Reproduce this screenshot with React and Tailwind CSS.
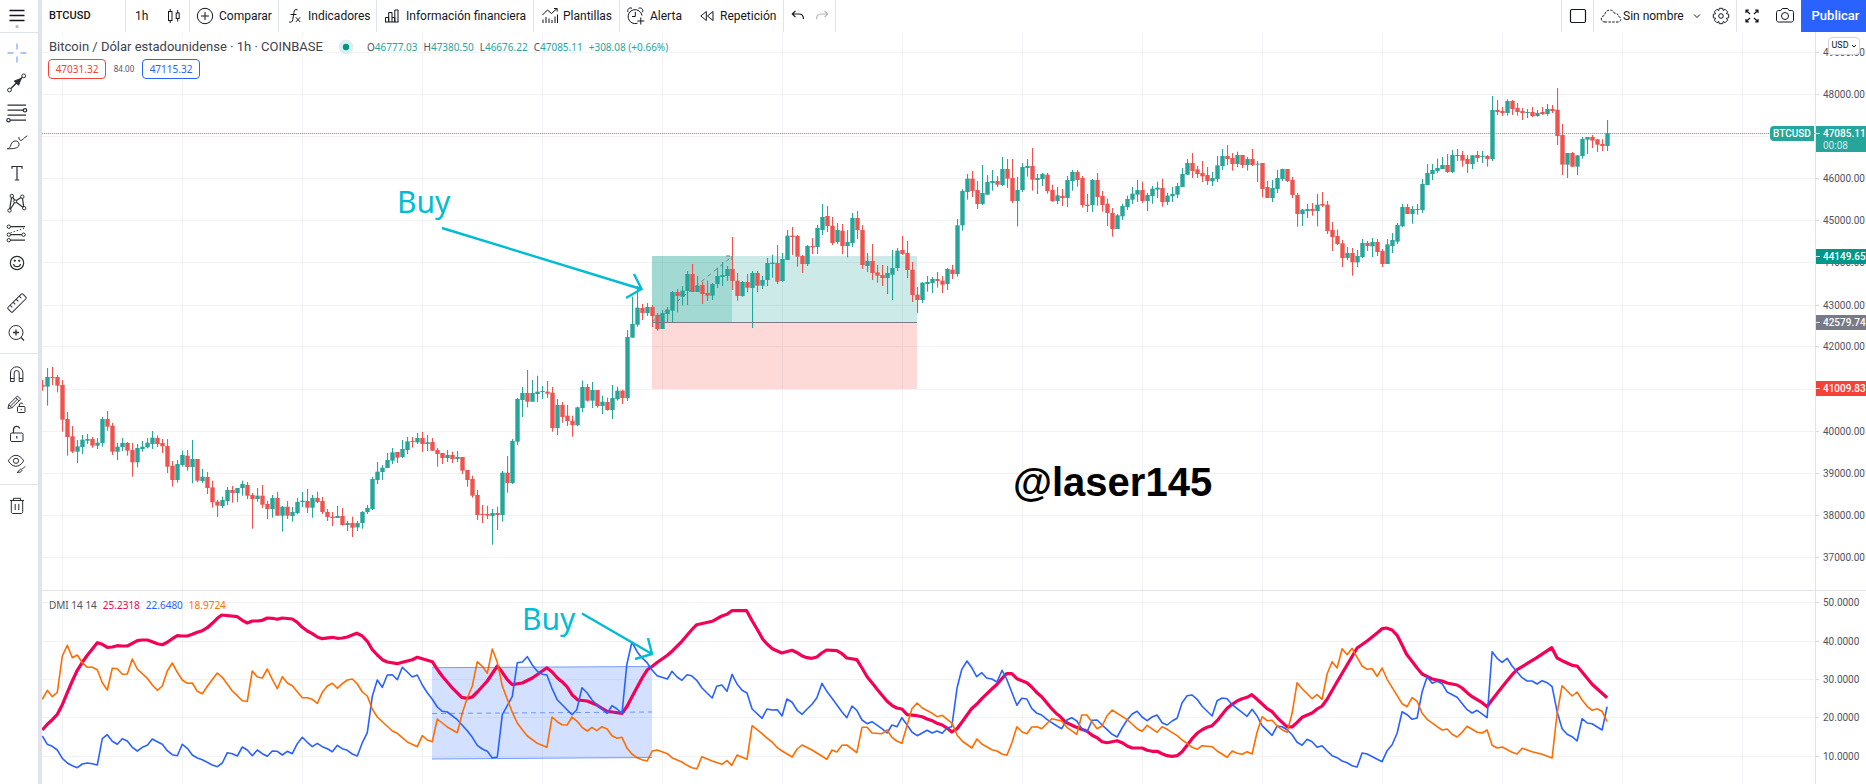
import React from "react";

/* ---------- price data: kind, high, top, bottom, low (in ticks below the block's base) ---------- */

const TICK = 3;
const BAR_STEP = 5;
const FIRST_BAR = 42;

const PRICE_BLOCKS = [
  {
    first: 0,
    base: 340,
    bars: `r 120 135 140 152;g 84 111 140 197;r 81 111 114 135;r 105 111 137 157;r 120 135 239 275;r 216 237 291 347;r 258 289 335 339;g 300 319 335 369;g 285 299 321 342;g 282 297 302 312;r 291 297 317 323;g 294 308 317 327;g 231 237 309 320;r 213 237 260 272;r 249 257 335 345;g 309 320 335 360;g 294 309 321 333;r 306 309 332 347;r 309 330 367 410;g 312 324 367 382;g 303 320 327 335;g 294 308 322 325;g 273 293 312 327;r 286 294 312 321;r 297 309 319 339;r 297 318 380 399;r 363 377 420 440;g 360 372 420 428;g 332 345 375 380;r 330 347 381 392;g 300 357 381 430;r 357 357 422 426;g 387 410 423 429;r 396 411 444 462;r 422 442 487 503;r 479 485 497 531;g 470 480 498 504;g 441 450 483 495;r 438 450 459 488;g 444 444 459 486;g 422 432 444 467;r 426 435 467 477;r 459 465 477 566;g 444 467 477 485;r 435 467 494 504;r 482 492 507 537;g 465 474 507 533;r 456 474 527 527;g 498 500 527 575;r 483 500 527 537;g 501 516 528 545;g 474 486 519 522;g 456 482 486 501;r 447 483 503 519;g 465 474 503 533;r 455 474 486 489;r 471 483 516 522;r 507 516 531 543;r 516 530 534 558;g 498 528 534 534;r 504 528 555 557;g 543 549 555 573;r 530 549 563 591;g 543 549 562 573;g 513 516 549 566;g 495 504 516 522;g 411 417 507 510;g 366 395 420 432;g 375 383 396 420;g 339 360 384 384;g 324 337 362 372;r 336 336 353 369;g 300 327 351 354;g 291 304 330 342;r 291 303 306 323;g 279 294 307 312;r 276 294 312 336;g 285 307 312 333;r 294 306 332 333;r 324 330 342 380;r 339 339 354 372;g 330 345 354 366;r 335 345 357 369;g 333 351 357 366;r 351 351 392 402;r 390 390 420 440;r 407 417 467 473;r 450 465 525 540;r 495 522 525 549;r 497 522 527 537;g 507 519 528 614;r 500 519 525 570`,
  },
  {
    first: 92,
    base: 180,
    bars: `g 873 878 1005 1025;r 828 878 909 938;g 777 783 909 912;g 654 657 785 795;g 621 639 660 711;r 570 639 665 682;g 600 639 665 665;g 587 635 642 666;g 618 633 636 657;r 603 635 641 654;r 621 638 744 755;g 657 675 744 765;r 666 675 711 728;r 675 707 723 738;r 707 722 735 770;g 680 682 736 738;g 602 621 684 697;r 612 621 662 665;g 606 630 662 684;r 630 630 678 683;g 647 665 678 702;r 653 666 690 692;g 615 654 690 717;g 620 632 657 662;r 629 632 654 672;g 450 471 654 663;g 350 432 473 473;g 318 383 434 440;r 372 384 399 420;g 369 381 399 408;r 375 381 408 441;r 399 405 447 452;g 390 399 447 447;g 381 389 402 429;g 333 336 392 428;r 327 336 348 397;g 318 332 350 376;g 273 282 333 375;r 252 282 336 336;g 288 317 336 336;r 305 315 342 372;r 302 339 347 363;g 309 312 347 360;g 263 288 312 324;g 246 285 291 318;g 258 267 288 303;r 171 267 303 330;r 279 302 348 362;g 303 306 348 350;r 282 306 323 336;g 273 279 324 444;r 273 279 317 336;g 288 300 317 327;g 234 249 300 318;g 224 248 252 293;r 195 249 305 312;g 219 237 303 306;g 150 167 240 240;r 141 167 171 225;r 165 168 230 260;r 225 228 252 279;g 195 198 252 258;r 174 198 202 222;g 135 144 201 222;g 72 111 150 165;r 78 108 138 156;r 111 137 189 195;g 129 150 186 192;r 132 152 198 222;g 150 186 198 232;g 99 114 189 201;r 93 114 150 177;r 135 150 255 267;g 219 243 258 276;r 192 243 279 300;r 255 277 287 308;r 255 285 294 318;g 258 279 294 342;g 210 264 284 360;g 204 212 264 273;r 168 210 222 225;r 183 219 270 294;r 246 269 345 366;r 321 344 360 399;g 306 308 360 369;g 288 306 312 335`,
  },
  {
    first: 178,
    base: 100,
    bars: `g 531 537 549 579;r 516 537 543 563;r 528 542 554 579;g 504 507 552 570;r 495 509 522 537;g 357 376 522 530;g 267 273 376 392;g 222 236 276 299;r 213 236 273 291;r 243 270 312 327;g 195 279 312 315;g 225 246 284 284;g 210 243 249 272;r 228 243 254 261;g 171 207 255 258;r 177 207 236 264;r 177 234 303 309;g 231 270 303 379;g 189 201 270 276;g 177 198 204 230;r 144 198 239 272;g 222 234 240 282;g 219 222 237 258;r 219 224 273 281;r 254 270 303 306;g 261 286 303 312;r 267 288 294 318;g 228 240 294 321;g 210 216 243 272;r 210 216 240 260;r 228 234 315 323;r 282 314 318 336;g 237 240 315 336;r 219 240 291 317;r 273 288 315 335;r 296 311 339 378;r 324 339 387 410;g 342 346 387 387;g 311 318 349 360;g 287 297 321 330;g 261 281 299 312;g 240 270 284 306;r 245 270 303 309;g 279 285 303 333;g 258 266 288 311;g 245 263 269 294;r 236 264 306 320;g 279 287 306 315;g 261 282 289 306;g 249 258 284 294;g 204 222 261 261;g 177 189 224 225;r 159 189 213 234;r 198 208 222 234;r 183 219 229 246;r 201 225 243 255;g 216 234 244 258;g 168 196 237 246;g 147 168 198 210;r 135 168 177 195;r 159 174 192 212;g 155 165 192 201;r 165 165 195 204;g 171 177 195 212;r 147 177 195 198;g 183 191 194 246;r 189 189 267 292;r 243 261 294 294;g 240 264 294 306;g 210 234 267 279;g 206 207 237 243;r 207 207 243 246;r 231 240 285 294;r 279 285 342 380;g 327 329 342 378;g 312 327 333 354;r 309 327 333 347;g 282 314 333 379;r 276 312 317 321;r 303 314 393 402;r 366 390 411 453;r 389 408 432 435;r 420 430 474 501;g 441 459 474 481;r 444 459 487 527;g 450 468 487 501;g 417 429 471 474;r 423 429 438 453;g 414 426 439 471`,
  },
  {
    first: 267,
    base: 70,
    bars: `r 507 516 546 558;r 537 543 582 591;g 507 523 582 582;g 489 510 528 549;g 459 465 515 522;g 402 411 469 471;r 402 411 432 432;g 408 417 432 461;g 402 417 420 434;g 327 342 420 429;g 282 309 345 345;g 282 300 312 330;g 266 294 303 309;g 261 285 297 297;r 252 285 306 309;g 240 255 306 309;g 237 255 258 273;r 243 255 272 290;r 255 267 282 309;g 255 256 282 297;r 243 255 264 276;g 243 258 261 279;r 255 258 267 290;g 78 120 267 273;r 90 120 126 135;r 111 123 129 138;g 88 93 129 137;r 90 93 117 135;r 99 114 126 137;r 114 123 129 150;g 117 126 129 144;r 111 126 138 141;g 120 129 138 140;r 111 126 132 135;g 102 117 132 137;r 105 117 123 129;r 54 119 198 225;r 162 195 284 315;g 249 249 284 324;r 246 249 290 291;g 255 256 290 315;g 201 207 258 266;g 201 201 209 252;r 195 201 212 234;r 207 208 224 246;r 208 222 228 243;g 150 189 228 243`,
  },
];

const CANDLES = PRICE_BLOCKS.flatMap(({ first, base, bars }) =>
  bars.split(";").map((bar, n) => {
    const [kind, ...levels] = bar.trim().split(" ");
    const [high, top, bottom, low] = levels.map((v) => base + Number(v) / TICK);
    return { x: FIRST_BAR + (first + n) * BAR_STEP, up: kind === "g", high, top, bottom, low };
  })
);

/* ---------- directional movement lines: three sections, each with its own horizontal scale ---------- */

const SECTIONS = [
  { x: 40, scale: 3 },
  { x: 540, scale: 2.904 },
  { x: 1060, scale: 2.8 },
];

const ADX = [
  "7,450 22,433 37,419 52,403 67,374 82,338 97,303 112,271 127,247 142,226 157,207 172,188 187,193 202,202 217,201 232,197 247,198 262,198 277,190 292,182 307,180 322,180 337,185 352,191 367,194 382,187 397,176 412,167 427,168 442,168 457,163 472,157 487,152 502,143 517,130 532,115 545,105 592,110 607,121 622,129 637,123 652,123 667,121 682,114 697,115 712,118 727,114 757,117 772,127 787,142 802,153 817,161 832,171 847,176 877,172 892,175 907,174 922,171 950,160 967,168 982,184 997,209 1012,225 1027,239 1042,246 1072,251 1087,247 1117,239 1132,232 1177,245 1192,268 1207,289 1235,322 1265,352 1282,355 1297,351 1312,336 1342,303 1372,258 1387,277 1402,299 1417,314 1447,309 1477,294",
  "20,263 35,276 50,293 64,305 79,321 93,344 110,360 137,363 165,375 180,385 195,394 210,396 238,400 252,380 267,351 282,322 297,293 312,269 326,259 341,247 370,226 385,212 412,184 440,150 455,134 500,124 528,108 543,103 557,92 600,92 615,121 632,150 647,178 660,193 675,206 702,219 732,211 747,218 760,227 775,233 790,235 804,231 818,219 832,210 862,212 877,221 891,234 920,239 935,264 950,290 964,308 980,329 1008,364 1022,376 1036,384 1051,387 1066,404 1095,407 1110,410 1124,417 1139,422 1153,430 1168,435 1183,445 1196,456 1211,446 1226,425 1253,386 1268,373 1283,356 1312,327 1326,314 1341,296 1355,281 1370,281 1385,296 1414,308 1428,321 1443,338 1457,350 1486,386 1501,402",
  "0,409 14,425 28,433 42,440 76,454 90,466 104,473 118,485 132,488 160,482 174,488 188,498 202,504 230,504 244,511 258,514 272,514 286,521 300,527 314,529 328,527 342,515 356,496 370,476 384,460 398,449 412,442 426,437 440,422 468,385 482,373 496,363 510,356 524,352 537,344 551,357 580,386 594,395 610,415 635,440 650,441 664,427 678,412 706,399 720,387 734,378 748,358 774,309 832,204 860,183 888,159 902,146 914,144 930,150 944,166 958,195 970,222 985,243 1000,264 1014,282 1042,297 1070,303 1084,309 1112,315 1126,324 1140,338 1154,350 1182,368 1196,380 1210,359 1238,321 1252,302 1266,284 1280,269 1335,233 1377,203 1392,234 1406,242 1434,256 1448,258 1462,276 1490,313 1532,353",
];

const PLUS_DI = [
  "7,468 22,493 37,499 52,510 67,535 82,549 97,557 112,563 127,552 142,549 157,551 172,555 187,476 202,464 217,484 232,493 247,476 262,483 277,502 292,513 307,502 322,496 337,477 352,485 367,493 382,512 397,524 412,527 427,493 442,505 457,525 472,534 487,539 517,555 532,560 547,549 562,518 577,521 592,528 607,501 622,510 637,527 652,510 667,521 682,529 697,513 712,514 727,525 742,514 757,521 772,491 787,472 802,487 817,500 832,490 847,500 862,506 877,515 892,496 907,506 922,511 937,522 952,528 967,488 982,458 997,349 1012,300 1027,322 1042,285 1057,284 1072,299 1087,262 1102,276 1117,291 1132,285 1147,315 1162,338 1177,358 1192,381 1207,394 1222,396 1252,419 1267,436 1282,452 1297,472 1312,496 1327,507 1342,514 1357,534 1372,531 1387,404 1402,377 1417,349 1432,248 1447,246 1462,230 1477,255 1492,274 1507,283",
  "20,285 35,326 50,359 93,404 107,389 122,323 137,339 151,360 165,374 195,400 209,377 224,387 238,400 252,254 267,186 282,215 296,233 311,248 326,271 340,287 370,297 383,274 398,291 412,301 427,284 440,287 455,301 470,323 485,339 500,354 513,319 528,315 543,334 558,283 572,312 587,331 601,339 616,387 645,415 659,387 674,390 689,389 703,408 717,357 732,367 747,391 761,403 775,388 790,373 804,353 819,310 833,334 862,374 877,396 891,413 906,378 920,391 935,420 950,431 964,425 993,446 1008,459 1022,435 1037,440 1051,413 1066,435 1080,456 1095,467 1124,451 1139,459 1153,453 1168,460 1182,444 1196,440 1211,325 1225,268 1240,243 1254,263 1268,290 1283,278 1297,294 1312,297 1327,306 1342,271 1355,297 1385,376 1399,355 1414,357 1428,385 1443,400 1457,405 1472,418 1501,438 1515,446 1530,420 1544,413",
  "47,423 62,448 76,455 90,421 104,420 118,435 132,449 146,463 160,471 174,444 188,420 202,402 216,394 230,411 244,422 258,411 272,405 286,428 300,435 314,423 328,415 342,368 356,347 370,345 384,358 398,379 426,408 440,362 454,354 468,356 482,374 524,409 538,388 552,408 566,437 594,466 608,438 622,440 636,449 650,464 664,487 678,496 692,478 706,485 720,502 734,497 748,513 762,527 776,533 790,543 804,548 818,557 832,561 846,519 860,522 902,545 916,512 930,494 944,460 958,395 972,404 986,418 1000,414 1014,336 1028,290 1042,310 1056,304 1070,311 1084,336 1112,352 1140,389 1154,399 1168,391 1196,413 1210,215 1224,235 1238,247 1252,235 1266,258 1294,293 1308,303 1322,303 1336,312 1350,302 1364,308 1378,320 1392,395 1406,446 1420,463 1434,470 1448,483 1462,416 1476,429 1490,431 1518,450 1532,380",
];

const MINUS_DI = [
  "7,358 22,331 37,350 52,337 67,228 82,196 97,233 112,225 127,248 142,262 157,262 172,269 187,308 202,330 217,265 232,266 247,283 262,282 277,237 292,267 322,295 337,315 352,331 367,318 382,273 397,249 412,277 427,300 442,310 457,309 472,334 487,341 502,319 532,279 547,292 577,333 592,347 607,362 622,364 637,273 652,291 667,294 682,267 697,298 712,326 727,290 742,309 757,317 787,353 802,353 817,358 832,370 847,337 862,318 877,310 892,325 907,311 922,300 937,297 952,312 967,336 982,348 997,388 1012,411 1057,453 1072,460 1087,473 1102,486 1132,500 1147,467 1162,480 1177,485 1192,417 1222,441 1252,458 1267,399 1282,354 1297,318 1312,245 1327,259 1342,280 1357,207 1372,247 1387,318 1417,397 1432,429 1447,449 1462,468 1492,490",
  "20,502 35,411 50,425 64,434 79,435 93,411 108,424 122,442 137,453 151,442 165,452 180,440 195,447 209,467 224,475 238,472 253,505 267,522 282,533 296,539 311,543 326,513 340,510 370,521 383,533 412,546 427,556 441,563 456,566 470,530 500,543 528,553 543,542 557,556 572,525 601,538 616,437 645,461 660,475 674,486 688,502 703,513 732,531 747,507 761,495 790,510 833,538 848,510 862,516 877,496 891,495 920,518 935,442 950,442 964,459 993,461 1008,450 1022,472 1036,483 1051,490 1080,386 1095,369 1110,384 1139,400 1153,410 1168,406 1197,430 1211,465 1226,483 1254,504 1269,477 1283,492 1312,509 1327,513 1341,522 1356,526 1370,489 1385,440 1400,456 1414,461 1428,441 1443,440 1457,446 1486,416 1515,423 1530,442",
  "47,463 61,405 75,405 104,446 118,438 132,407 146,390 188,419 202,432 216,446 230,454 244,436 272,457 286,440 300,448 328,467 342,480 356,490 370,502 384,508 398,497 426,500 440,513 468,532 482,513 496,520 510,523 524,515 538,522 552,456 566,410 580,422 594,421 608,438 622,449 636,457 650,400 664,308 678,326 706,356 720,344 734,358 748,282 762,245 776,264 790,206 804,224 818,205 832,232 846,258 860,268 874,266 888,289 902,264 916,298 958,371 972,380 986,353 1000,364 1014,400 1028,418 1056,440 1070,450 1084,447 1098,463 1112,471 1126,457 1140,439 1168,457 1182,459 1196,450 1210,496 1224,504 1238,501 1266,517 1280,522 1294,505 1322,515 1350,523 1378,534 1392,400 1406,317 1434,348 1448,336 1462,360 1476,379 1490,391 1504,386 1518,394 1532,425",
];

const toPoints = (sections) =>
  sections
    .flatMap((section, s) =>
      section.split(" ").map((pair) => {
        const [x, y] = pair.split(",").map(Number);
        return `${(SECTIONS[s].x + x / SECTIONS[s].scale).toFixed(1)},${(580 + y / TICK).toFixed(1)}`;
      })
    )
    .join(" ");

const GRID_X = Array.from({ length: 15 }, (_, k) => 62 + 120 * k);
const PRICE_LEVELS = [
  ["49000.00", 52], ["48000.00", 94], ["47000.00", 136], ["46000.00", 178], ["45000.00", 220],
  ["44000.00", 262], ["43000.00", 305], ["42000.00", 346], ["41000.00", 389], ["40000.00", 431],
  ["39000.00", 473], ["38000.00", 515], ["37000.00", 557],
];
const DMI_LEVELS = [["50.0000", 602], ["40.0000", 641], ["30.0000", 679], ["20.0000", 717], ["10.0000", 756]];
const HIDDEN_LABELS = ["47000.00", "41000.00"];
const PRICE_TAGS = [
  { text: "44149.65", y: 249, fill: "#009688" },
  { text: "42579.74", y: 315, fill: "#787b86" },
  { text: "41009.83", y: 381, fill: "#f44336" },
];

/* ---------- icons ---------- */

function Icon({ size = 24, children, className = "" }) {
  return (
    <svg
      width={size}
      height={size}
      viewBox={`0 0 ${size} ${size}`}
      fill="none"
      stroke="currentColor"
      strokeWidth="1"
      className={`shrink-0 ${className}`}
      aria-hidden="true"
    >
      {children}
    </svg>
  );
}

const DRAW_TOOLS = [
  ["Cruz", <g key="i" stroke="#8fb0ff" strokeWidth="1.4"><path d="M2.5 12h6M15.5 12h6M12 2.5v6M12 15.5v6" /></g>],
  ["Línea de tendencia", <g key="i"><circle cx="4.5" cy="19" r="1.9" /><circle cx="18.7" cy="4.9" r="1.9" /><path d="M5.9 17.6 17.3 6.3" strokeWidth="1.4" /><path d="M16.2 7.4 9.3 10l4.3 4.3z" fill="currentColor" /></g>],
  ["Fibonacci", <g key="i" strokeWidth="1.2"><path d="M2.5 4.2h18.5M2.5 9.2h15.8M2.5 14.2h18.5M5 19.2h16" /><circle cx="20" cy="9.3" r="1.7" /><circle cx="3.5" cy="19.2" r="1.7" /></g>],
  ["Pincel", <g key="i"><path d="M2.3 17.8c2.2-.2 3-2 3.6-4 .7-2.4 2.8-4.2 5.3-3.8 2.5.4 3.6 2.9 2.4 5-1.3 2.2-4.2 2.8-11.3 2.8zM14 6c-.4 1.4.3 3.2 1.7 3.4 1.9.3 2.7-2.7 6.6-4.6" /></g>],
  ["Texto", <g key="i" strokeWidth="1.2"><path d="M7 7.8V5.5h10v2.3M12 5.5v13.5M9.8 19h4.4" /></g>],
  ["Patrón", <g key="i"><path d="M4.7 18.2 6.5 6.7M7.6 6.2l2 3M11 9.8l5-3.3M17.5 7.3l1.2 8.5M11.2 11.3l6.8 5M9.5 11.7 5.5 18" strokeWidth="1.2" /><circle cx="6.8" cy="5" r="1.7" /><circle cx="17.3" cy="5.7" r="1.7" /><circle cx="4.5" cy="19.5" r="1.7" /><circle cx="19.2" cy="17.2" r="1.7" /><circle cx="10.2" cy="10.4" r="1.5" /></g>],
  ["Predicción", <g key="i"><circle cx="3.8" cy="5.7" r="1.7" /><path d="M5.5 5.7H20M5.5 13.7h11.3M5.5 19.2H20" strokeWidth="1.2" /><circle cx="3.8" cy="13.7" r="1.7" /><circle cx="18.5" cy="13.7" r="1.7" /><circle cx="3.8" cy="19.2" r="1.7" /><path d="M5.5 11.8 19 7.3" strokeDasharray="1.3 2" /></g>],
  ["Icono", <g key="i"><circle cx="12" cy="12" r="6.7" strokeWidth="1.2" /><path d="M8.5 13c.6 3.6 6.4 3.6 7 0" strokeWidth="1.2" /><circle cx="9.8" cy="9.7" r=".7" fill="currentColor" /><circle cx="14.2" cy="9.7" r=".7" fill="currentColor" /></g>],
];

const VIEW_TOOLS = [
  ["Medir", <g key="i"><g transform="rotate(-45 12 12)"><rect x="1.5" y="8.7" width="21" height="6.6" rx="1.2" /><path d="M5.5 8.7v3M9.8 8.7v3M14.1 8.7v3M18.4 8.7v3" /></g></g>],
  ["Acercar", <g key="i"><circle cx="11" cy="11.5" r="7" /><path d="M11 8.5v6M8 11.5h6M16 16.5l3 3" strokeWidth="1.3" /></g>],
];

const LOCK_TOOLS = [
  ["Imán", <g key="i"><path d="M5.5 19.5V11a6.2 6.2 0 0 1 12.4 0v8.5h-3.7V11a2.5 2.5 0 0 0-5 0v8.5zM5.5 16.5h3.7M14.2 16.5h3.7" /></g>],
  ["Modo dibujo", <g key="i"><path d="M3 16.5l.8-4L12.5 4l3.2 3.2-8.8 8.6zM3.8 12.5l3.1 3.3M10.8 5.7l3.2 3.2M5.5 14l6.8-6.7" /><rect x="12.5" y="14.5" width="7.5" height="6" rx="1" /><path d="M14.3 14.5V13a2 2 0 0 1 3.8-.8M16.2 16.8v1.4" /></g>],
  ["Bloquear", <g key="i"><rect x="5.5" y="11" width="12.5" height="8.5" rx="1.3" /><path d="M8.5 11V7.5a3.2 3.2 0 0 1 6.2-1M11.8 14v2.6" strokeWidth="1.2" /></g>],
  ["Ocultar", <g key="i"><path d="M3.3 8.8C7.6 1.5 14.3 1.5 18.7 8.8c-4.4 7.3-11.1 7.3-15.4 0z" /><circle cx="11" cy="8.8" r="2.6" /><path d="M12 20.5c1.8 0 1.7-2.8 3.5-3.3 2.3-.4 2.7 3.3-3.5 3.3zM17 16.3c.8.7 1.7-.8 3.3-1.8" /></g>],
];

const FrameCandles = () => (
  <Icon size={16}><rect x="2.5" y="3.5" width="3.5" height="9" /><path d="M4.2 1v2.5M4.2 12.5V15M11.7 2v3M11.7 10.5v3" /><rect x="10.2" y="5" width="3" height="5.5" /></Icon>
);
const CompareIcon = () => (
  <Icon size={18}><circle cx="9" cy="9" r="7.7" /><path d="M9 5v8M5 9h8" /></Icon>
);
const FxIcon = () => (
  <Icon size={16}><path d="M10.5 1.8C8 .9 7.3 2 7 4.3L5.8 11.5C5.4 14 4.2 14.7 2 13.9M3.5 6.5h6M8.8 9.3l4.4 4.7M13.2 9.3 8.8 14" /></Icon>
);
const FinanceIcon = () => (
  <Icon size={16}><path d="M1.5 14V9.5h3.2V14M4.7 14V4.5H8V14M8 9.5h2.8V14M10.8 14V2h3.2v12M1 14h13.5" /></Icon>
);
const TemplateIcon = () => (
  <Icon size={18}><path d="M1.5 8 6.5 3l4 3.5 5.5-5M13 1.5h3.2v3M2 12.5v3.5M5 10v6M8 11.5V16M11 13v3M14 9.5V16M16.5 7.5V16" /></Icon>
);
const AlarmIcon = () => (
  <Icon size={20}><path d="M11.5 17.2A7 7 0 1 1 16 9.5M9.3 5.8v4.7H6M2 6.2C.8 3.5 3.2 1 6 2.3M12.5 2.3c2.8-1.3 5.2 1.2 4 3.9M14.8 11.5v7M11.3 15h7" /></Icon>
);
const ReplayIcon = () => (
  <Icon size={16}><path d="M7.3 3.5v9L1.8 8zM14 3.5v9L8.5 8z" /></Icon>
);
const UndoIcon = () => (
  <Icon size={16}><path d="M5.5 2.8 2.3 6l3.2 3.2M2.5 6H9c3 0 4.500 1.800 4.500 5" strokeWidth="1.2" /></Icon>
);
const RedoIcon = () => (
  <Icon size={16}><path d="M10.5 2.8 13.7 6l-3.2 3.2M13.5 6H7c-3 0-4.500 1.800-4.500 5" strokeWidth="1.2" /></Icon>
);
const FrameIcon = () => (
  <Icon size={18}><rect x="1.5" y="2.5" width="15" height="13" rx="1.500" strokeWidth="1.2" /></Icon>
);
const CloudIcon = () => (
  <svg width="22" height="16" viewBox="0 0 22 16" fill="none" stroke="currentColor" strokeDasharray="2.5 1.3" aria-hidden="true" className="shrink-0">
    <path d="M5 14C.2 14 0 8 4.6 7.5 5 1 13 .5 14.3 5.2c3-.2 4.2 1.500 4 3.300C22 9 21.500 14 18 14z" />
  </svg>
);
const GearIcon = () => (
  <Icon size={18}>
    <path d="M7.3 1.3h3.4l.5 2.2 1.9-1.2 2.5 2.5-1.2 1.9 2.3.6v3.4l-2.3.6 1.2 1.9-2.5 2.5-1.9-1.2-.5 2.2H7.3l-.5-2.2-1.9 1.2-2.500-2.500 1.200-1.900-2.300-.6V7.300l2.300-.6-1.200-1.900 2.500-2.500 1.900 1.200z" strokeLinejoin="round" />
    <circle cx="9" cy="9" r="2.3" />
  </Icon>
);
const FullscreenIcon = () => (
  <Icon size={18}><path d="M3 6V3.200h2.800M3 3.200 7 7M12.200 3.200H15V6M15 3.200 11 7M3 12v2.800h2.800M3 14.800 7 11M12.200 14.800H15V12M15 14.800 11 11" strokeWidth="1.2" /></Icon>
);
const CameraIcon = () => (
  <Icon size={20}><path d="M3.5 4.5h2.300L7.300 2.500h5.400l1.500 2h2.300c1.200 0 2 .8 2 2v7.500c0 1.200-.8 2-2 2h-13c-1.200 0-2-.8-2-2V6.500c0-1.200.8-2 2-2z" /><circle cx="10" cy="10" r="3.500" /></Icon>
);

/* ---------- toolbars ---------- */

const BAR_BUTTON = "flex items-center whitespace-nowrap";

function TopBar() {
  return (
    <header className="flex h-8 shrink-0 items-stretch text-xs text-[#131722]">
      <button className="w-[84px] border-r border-[#e0e3eb] pl-[7px] text-left text-[11px] font-medium">BTCUSD</button>
      <div className="flex w-16 items-center justify-between border-r border-[#e0e3eb] pr-[7px] pl-[9px]">
        <button>1h</button>
        <button aria-label="Velas"><FrameCandles /></button>
      </div>
      <button className={`${BAR_BUTTON} w-[89px] gap-[5px] border-r border-[#e0e3eb] pl-[6px]`}><CompareIcon />Comparar</button>
      <button className={`${BAR_BUTTON} w-[98px] gap-[5px] border-r border-[#e0e3eb] pl-2`}><FxIcon />Indicadores</button>
      <button className={`${BAR_BUTTON} w-[157px] gap-[6px] border-r border-[#e0e3eb] pl-[7px]`}><FinanceIcon />Información financiera</button>
      <button className={`${BAR_BUTTON} w-[86px] gap-1 border-r border-[#e0e3eb] pl-[7px]`}><TemplateIcon />Plantillas</button>
      <div className="flex w-[164px] border-r border-[#e0e3eb] pl-[6px]">
        <button className={`${BAR_BUTTON} w-[73px] gap-1`}><AlarmIcon />Alerta</button>
        <button className={`${BAR_BUTTON} gap-[5px]`}><ReplayIcon />Repetición</button>
      </div>
      <div className="flex w-[52px] items-center gap-2 border-r border-[#e0e3eb] pl-[6px]">
        <button aria-label="Deshacer"><UndoIcon /></button>
        <button aria-label="Rehacer" className="text-[#b2b5be]"><RedoIcon /></button>
      </div>
      <div className="flex-1" />
      <button aria-label="Diseño" className="flex w-[33px] items-center justify-center border-x border-[#e0e3eb]"><FrameIcon /></button>
      <div className="flex w-[143px] items-center border-r border-[#e0e3eb] pl-[6px]">
        <button className={BAR_BUTTON}>
          <CloudIcon />
          <span className="pl-px">Sin nombre</span>
          <svg width="10" height="8" viewBox="0 0 10 8" fill="none" stroke="currentColor" className="ml-2" aria-hidden="true"><path d="M2 2.500 5 5.500l3-3" /></svg>
        </button>
        <button aria-label="Configuración" className="mr-[6px] ml-auto"><GearIcon /></button>
      </div>
      <div className="flex w-16 items-center justify-between px-[6px]">
        <button aria-label="Pantalla completa"><FullscreenIcon /></button>
        <button aria-label="Captura"><CameraIcon /></button>
      </div>
      <button className="w-[65px] bg-[#2962ff] pl-1 text-[13px] font-medium text-white">Publicar</button>
    </header>
  );
}

function ToolGroup({ tools }) {
  return tools.map(([label, drawing]) => (
    <button key={label} aria-label={label} className="flex h-[30px] w-[34px] items-center justify-center">
      <Icon>{drawing}</Icon>
    </button>
  ));
}

function SideBar() {
  return (
    <nav aria-label="Herramientas" className="flex w-[38px] shrink-0 flex-col bg-white text-[#2a2e39]">
      <button aria-label="Menú" className="flex h-[33px] flex-col items-center border-b border-[#e0e3eb] pt-[9px] pr-1">
        <svg width="16" height="20" viewBox="0 0 16 20" aria-hidden="true">
          <path d="M.5 1.5h15M.5 6.5h15M.5 11.5h15" stroke="#131722" strokeWidth="1.5" />
          <circle cx="8" cy="17.5" r="1.6" fill="#b2b5be" />
        </svg>
      </button>
      <div className="flex flex-col pt-[5px] pb-[10px]"><ToolGroup tools={DRAW_TOOLS} /></div>
      <div className="flex flex-col border-b border-[#e0e3eb] pb-[5px]"><ToolGroup tools={VIEW_TOOLS} /></div>
      <div className="flex flex-col border-b border-[#e0e3eb] py-[5px]"><ToolGroup tools={LOCK_TOOLS} /></div>
      <div className="flex flex-col pt-[6px]">
        <ToolGroup
          tools={[["Eliminar", <g key="i"><path d="M5 6.5h14M8.5 6.5V4.3h7v2.2M6.3 6.5v11.2c0 1 .7 1.8 1.7 1.8h8c1 0 1.7-.8 1.7-1.8V6.500M10.200 10v6M13.800 10v6" /></g>]]}
        />
      </div>
    </nav>
  );
}

/* ---------- chart panes ---------- */

function Grid({ levels }) {
  return (
    <g fill="#f1f2f4">
      {GRID_X.map((x) => <rect key={x} x={x} y="0" width="1" height="2000" />)}
      {levels.map(([label, y]) => <rect key={label} x="42" y={y} width="100%" height="1" />)}
    </g>
  );
}

function Levels({ levels }) {
  return levels.map(([label, y]) => (
    <g key={label}>
      <rect x="0" y={y} width="3" height="1" fill="#d8dae0" />
      {!HIDDEN_LABELS.includes(label) && <text x="7" y={y + 4} fill="#50535e">{label}</text>}
    </g>
  ));
}

function Ohlc({ name, value }) {
  return <span className="text-[#50535e]">{name}<span className="text-[#26a69a]">{value}</span></span>;
}

function PricePane() {
  return (
    <section className="relative flex min-h-0 flex-[558_1_0%] border-b border-[#e0e3eb]">
      <svg className="h-full min-w-0 flex-1" role="img" aria-label="Gráfico de velas BTCUSD">
        <g transform="translate(-42 -32)">
          <Grid levels={PRICE_LEVELS} />
          <rect x="652" y="256" width="265" height="66" fill="#009688" fillOpacity=".2" />
          <rect x="652" y="256" width="80" height="66" fill="#009688" fillOpacity=".2" />
          <rect x="652" y="322" width="265" height="67" fill="#f44336" fillOpacity=".2" />
          {CANDLES.map((c) => (
            <g key={c.x} fill={c.up ? "#26a69a" : "#ef5350"}>
              <rect x={c.x} y={c.high} width="1.1" height={c.low - c.high} />
              <rect x={c.x - 1.7} y={c.top} width="4.4" height={Math.max(1, c.bottom - c.top)} />
            </g>
          ))}
          <path d="M652 322.5h265" stroke="#787b86" />
          <path d="M652 322 732 256.5" stroke="#787b86" strokeDasharray="4 4" fill="none" />
          <path d="M726 256h6v6" stroke="#787b86" strokeDasharray="4 2" fill="none" />
          <path d="M442 228 641 289M634 274l7.5 15-15.5 9" stroke="#00bcd4" strokeWidth="2.4" fill="none" />
          <text x="397" y="213" fontSize="30" fill="#00bcd4" className="font-['Noto_Sans',sans-serif]">Buy</text>
          <text x="1013" y="496" fontSize="40" fontWeight="700" fill="#000" className="font-['Liberation_Sans',sans-serif]">@laser145</text>
        </g>
        <line x1="0" x2="100%" y1="101.5" y2="101.5" stroke="#26a69a" strokeDasharray="1 1" strokeOpacity=".8" />
      </svg>
      <div className="absolute top-[7px] left-[7px] flex flex-col gap-[4px]">
        <div className="flex h-4 items-center whitespace-nowrap">
          <h1 className="bg-white text-[13px] text-[#40434e]">Bitcoin / Dólar estadounidense · 1h · COINBASE</h1>
          <svg width="16" height="16" viewBox="0 0 16 16" className="ml-[15px]" aria-hidden="true">
            <circle cx="8" cy="8" r="7.5" fill="#d9f0ee" /><circle cx="8" cy="8" r="3.2" fill="#009688" />
          </svg>
          <p className="ml-[13px] flex gap-[6px] font-['Noto_Sans',sans-serif] text-[10px]">
            <Ohlc name="O" value="46777.03" />
            <Ohlc name="H" value="47380.50" />
            <Ohlc name="L" value="46676.22" />
            <Ohlc name="C" value="47085.11" />
            <span className="text-[#26a69a]">+308.08 (+0.66%)</span>
          </p>
        </div>
        <div className="flex items-center gap-[6px] font-['Noto_Sans',sans-serif] text-[10px]">
          <button className="-ml-px h-5 w-[58px] rounded border border-[#f44336] bg-white text-[#f44336]">47031.32</button>
          <span className="w-6 text-center text-[8px] text-[#50535e]">84.00</span>
          <button className="h-5 w-[58px] rounded border border-[#2962ff] bg-white text-[#2962ff]">47115.32</button>
        </div>
      </div>
      <div className="absolute top-[94px] right-[52px] h-[15px] w-11 rounded-l-sm bg-[#26a69a] text-center text-[10px] leading-[15px] font-medium text-white">BTCUSD</div>
      <svg className="h-full w-[51px] shrink-0 border-l border-[#e0e3eb] text-[10px]" aria-label="Escala de precios">
        <g transform="translate(0 -32)">
          <Levels levels={PRICE_LEVELS} />
          {PRICE_TAGS.map((tag) => (
            <g key={tag.text}>
              <rect x="0" y={tag.y} width="51" height="15" fill={tag.fill} />
              <rect x="0" y={tag.y + 7} width="4" height="1" fill="#fff" fillOpacity=".8" />
              <text x="7" y={tag.y + 11} fill="#fff" fontWeight="500">{tag.text}</text>
            </g>
          ))}
          <rect x="0" y="126" width="51" height="26" fill="#26a69a" />
          <rect x="0" y="133" width="4" height="1" fill="#fff" fillOpacity=".8" />
          <text x="7" y="137" fill="#fff" fontWeight="500">47085.11</text>
          <text x="7" y="149" fill="#fff" fillOpacity=".8">00:08</text>
        </g>
      </svg>
      <button className="absolute top-[5px] right-[6px] flex h-[18px] w-8 items-center justify-center gap-[2px] rounded border border-[#d1d4dc] bg-white text-[9px] text-[#131722]">
        USD
        <svg width="6" height="6" viewBox="0 0 6 6" fill="none" stroke="currentColor" aria-hidden="true"><path d="M1 2l2 2 2-2" /></svg>
      </button>
    </section>
  );
}

function DmiPane() {
  return (
    <section className="relative flex min-h-0 flex-[193_1_0%]">
      <svg className="h-full min-w-0 flex-1" role="img" aria-label="Índice de movimiento direccional">
        <g transform="translate(-42 -591)" fill="none" strokeLinejoin="round">
          <Grid levels={DMI_LEVELS} />
          <path d="M432 667.7 652 666.5V757.5L432 759z" fill="#2962ff" fillOpacity=".2" />
          <polyline points={toPoints(ADX)} stroke="#f50057" strokeWidth="3.2" />
          <polyline points={toPoints(PLUS_DI)} stroke="#2962ff" strokeWidth="1.6" />
          <polyline points={toPoints(MINUS_DI)} stroke="#ff6d00" strokeWidth="1.6" />
          <path d="M432 667.7 652 666.5M432 759 652 757.5" stroke="#2962ff" strokeOpacity=".6" />
          <path d="M432 713.5 652 712" stroke="#2962ff" strokeOpacity=".6" strokeDasharray="5 4" />
          <path d="M582 613.5 652 654M648 638l4 16-17 5" stroke="#00bcd4" strokeWidth="2.4" />
          <text x="522" y="630" fontSize="30" fill="#00bcd4" className="font-['Noto_Sans',sans-serif]">Buy</text>
        </g>
      </svg>
      <p className="absolute top-[6px] left-[7px] flex gap-[6px] font-['Noto_Sans',sans-serif] text-[10px] leading-4 text-[#50535e]">
        <span>DMI 14 14</span>
        <span className="text-[#f50057]">25.2318</span>
        <span className="text-[#2962ff]">22.6480</span>
        <span className="text-[#ff6d00]">18.9724</span>
      </p>
      <svg className="h-full w-[51px] shrink-0 border-l border-[#e0e3eb] text-[10px]" aria-label="Escala DMI">
        <g transform="translate(0 -591)"><Levels levels={DMI_LEVELS} /></g>
      </svg>
    </section>
  );
}

export default function App() {
  return (
    <div className="flex h-screen overflow-hidden bg-white font-[Roboto,'Noto_Sans',sans-serif]">
      <SideBar />
      <div className="w-1 shrink-0 bg-[#e0e3eb]" />
      <div className="flex min-w-0 flex-1 flex-col">
        <TopBar />
        <main className="flex min-h-0 flex-1 flex-col">
          <PricePane />
          <DmiPane />
        </main>
      </div>
    </div>
  );
}
